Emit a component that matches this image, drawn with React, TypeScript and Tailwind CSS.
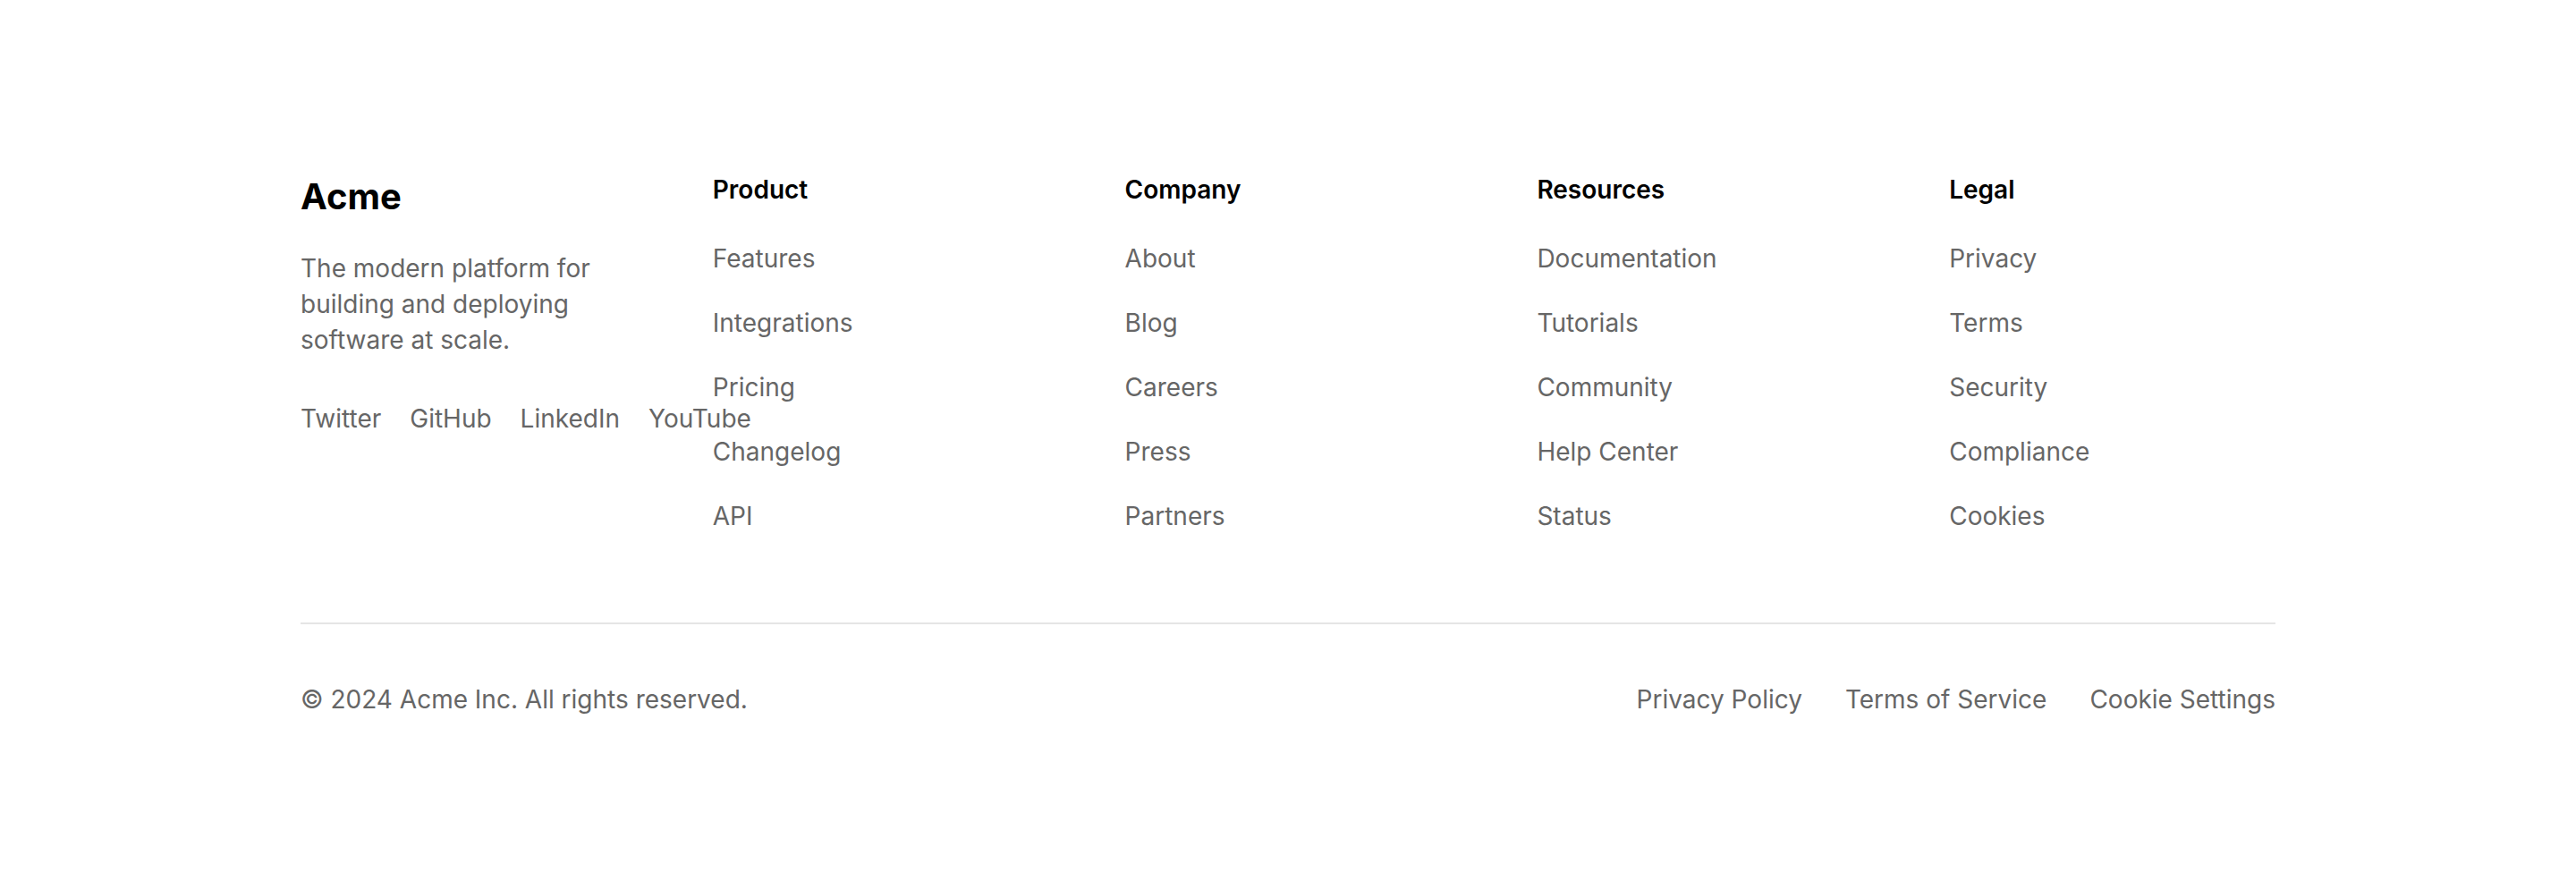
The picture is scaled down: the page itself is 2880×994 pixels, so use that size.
import React from 'react';

const columns = [
  {
    title: 'Product',
    links: ['Features', 'Integrations', 'Pricing', 'Changelog', 'API'],
  },
  {
    title: 'Company',
    links: ['About', 'Blog', 'Careers', 'Press', 'Partners'],
  },
  {
    title: 'Resources',
    links: ['Documentation', 'Tutorials', 'Community', 'Help Center', 'Status'],
  },
  {
    title: 'Legal',
    links: ['Privacy', 'Terms', 'Security', 'Compliance', 'Cookies'],
  },
];

const socials = ['Twitter', 'GitHub', 'LinkedIn', 'YouTube'];
const bottomLinks = ['Privacy Policy', 'Terms of Service', 'Cookie Settings'];

export default function App() {
  return (
    <div className="[zoom:2] bg-white font-['Inter',sans-serif]">
      <footer className="py-24">
        <div className="max-w-6xl mx-auto px-6">
          <div className="grid grid-cols-5 gap-12">
            <div>
              <h2 className="text-xl font-bold text-black mb-4">Acme</h2>
              <p className="text-sm text-[#666666]">
                The modern platform for building and deploying software at scale.
              </p>
              <div className="flex gap-4 mt-6">
                {socials.map((s) => (
                  <a key={s} href="#" className="text-sm text-[#666666] whitespace-nowrap">
                    {s}
                  </a>
                ))}
              </div>
            </div>

            {columns.map((col) => (
              <div key={col.title}>
                <h3 className="text-sm font-semibold text-black mb-4">{col.title}</h3>
                <ul className="space-y-3">
                  {col.links.map((link) => (
                    <li key={link}>
                      <a href="#" className="text-sm text-[#666666]">
                        {link}
                      </a>
                    </li>
                  ))}
                </ul>
              </div>
            ))}
          </div>

          <div className="mt-12 pt-8 border-t border-[#e5e5e5] flex items-center justify-between">
            <p className="text-sm text-[#666666]">© 2024 Acme Inc. All rights reserved.</p>
            <div className="flex gap-6">
              {bottomLinks.map((l) => (
                <a key={l} href="#" className="text-sm text-[#666666]">
                  {l}
                </a>
              ))}
            </div>
          </div>
        </div>
      </footer>
    </div>
  );
}
